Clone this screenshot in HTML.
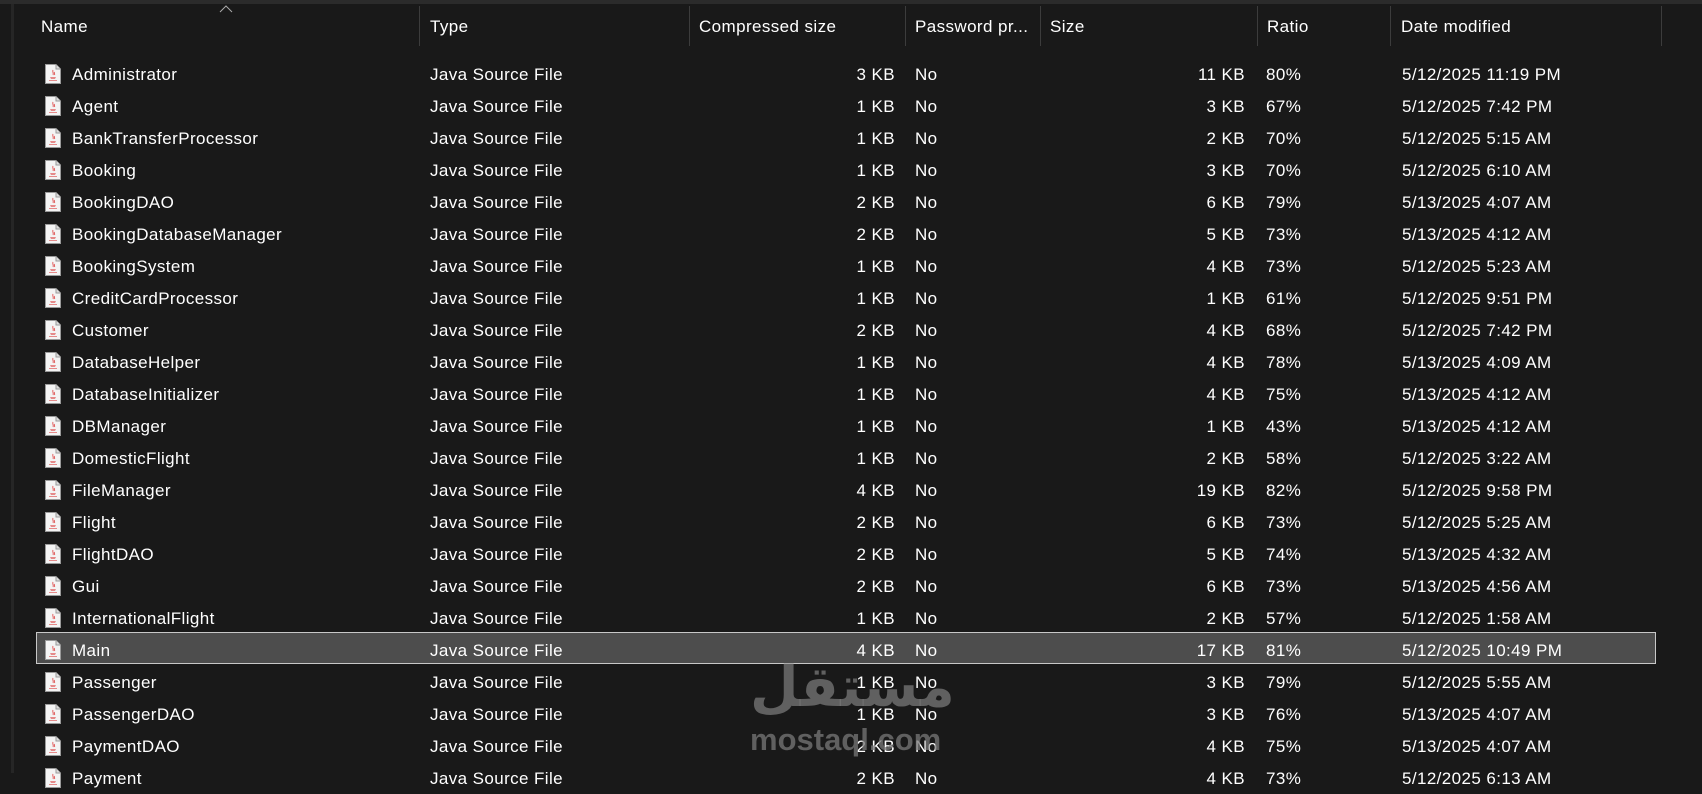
<!DOCTYPE html>
<html><head><meta charset="utf-8"><style>
*{margin:0;padding:0;box-sizing:border-box}
body{width:1702px;height:773px;overflow:hidden;background:#191919;font-family:"Liberation Sans",sans-serif;font-size:17px;letter-spacing:0.4px;color:#fff;position:relative}
.top{position:absolute;left:0;top:0;width:1702px;height:4px;background:#2b2b2b}
.vl{position:absolute;left:11px;top:4px;width:3px;height:769px;background:#262626}
.sep{position:absolute;top:6px;height:40px;width:1px;background:#3c3c3c}
.h{position:absolute;top:17px;color:#fff;white-space:nowrap}
.row{position:absolute;left:0;width:1702px;height:32px}
.row span{position:absolute;top:7px;white-space:nowrap}
.r{text-align:right}
.sel{background:#4d4d4d;border:1px solid #c8c8c8;position:absolute;left:36px;width:1620px;height:32px}
.ic{position:absolute;left:45px;top:6px;width:16px;height:20px}
.wm{position:absolute;color:rgba(120,120,120,0.75);font-weight:bold;white-space:nowrap;letter-spacing:0}
</style></head><body>
<div class="top"></div><div class="vl"></div>
<svg style="position:absolute;left:219px;top:5px" width="14" height="8"><path d="M1 7 L7 1 L13 7" stroke="#aaa" fill="none" stroke-width="1"/></svg>
<div class="h" style="left:41px">Name</div>
<div class="h" style="left:430px">Type</div>
<div class="h" style="left:699px">Compressed size</div>
<div class="h" style="left:915px">Password pr...</div>
<div class="h" style="left:1050px">Size</div>
<div class="h" style="left:1267px">Ratio</div>
<div class="h" style="left:1401px">Date modified</div>
<div class="sep" style="left:419px"></div><div class="sep" style="left:689px"></div><div class="sep" style="left:905px"></div><div class="sep" style="left:1040px"></div><div class="sep" style="left:1257px"></div><div class="sep" style="left:1390px"></div><div class="sep" style="left:1661px"></div>
<div class="sel" style="top:632px"></div>
<div id="rows"></div>
<script>
var d=[["Administrator",3,11,80,"5/12/2025 11:19 PM"],["Agent",1,3,67,"5/12/2025 7:42 PM"],["BankTransferProcessor",1,2,70,"5/12/2025 5:15 AM"],["Booking",1,3,70,"5/12/2025 6:10 AM"],["BookingDAO",2,6,79,"5/13/2025 4:07 AM"],["BookingDatabaseManager",2,5,73,"5/13/2025 4:12 AM"],["BookingSystem",1,4,73,"5/12/2025 5:23 AM"],["CreditCardProcessor",1,1,61,"5/12/2025 9:51 PM"],["Customer",2,4,68,"5/12/2025 7:42 PM"],["DatabaseHelper",1,4,78,"5/13/2025 4:09 AM"],["DatabaseInitializer",1,4,75,"5/13/2025 4:12 AM"],["DBManager",1,1,43,"5/13/2025 4:12 AM"],["DomesticFlight",1,2,58,"5/12/2025 3:22 AM"],["FileManager",4,19,82,"5/12/2025 9:58 PM"],["Flight",2,6,73,"5/12/2025 5:25 AM"],["FlightDAO",2,5,74,"5/13/2025 4:32 AM"],["Gui",2,6,73,"5/13/2025 4:56 AM"],["InternationalFlight",1,2,57,"5/12/2025 1:58 AM"],["Main",4,17,81,"5/12/2025 10:49 PM"],["Passenger",1,3,79,"5/12/2025 5:55 AM"],["PassengerDAO",1,3,76,"5/13/2025 4:07 AM"],["PaymentDAO",2,4,75,"5/13/2025 4:07 AM"],["Payment",2,4,73,"5/12/2025 6:13 AM"]];
var ic='<svg class="ic" viewBox="0 0 16 20"><path d="M0.5 0.5H11L15.5 5V19.5H0.5Z" fill="#f4f4f4" stroke="#9a9a9a"/><path d="M11 0.5V5H15.5" fill="#ddd" stroke="#9a9a9a"/><path d="M5 13h6l-1 2h-4z" fill="#e58a8a"/><path d="M8 6c-1 2 1 3 0 5M9.5 8c-.6 1 .5 1.6 0 3" stroke="#e06060" fill="none"/><path d="M4 16.5h8" stroke="#e58a8a"/></svg>';
var h='';
d.forEach(function(r,i){var t=57.5+32*i;h+='<div class="row" style="top:'+t+'px">'+ic+'<span style="left:72px">'+r[0]+'</span><span style="left:430px">Java Source File</span><span class="r" style="left:780px;width:115px">'+r[1]+' KB</span><span style="left:915px">No</span><span class="r" style="left:1100px;width:145px">'+r[2]+' KB</span><span style="left:1266px">'+r[3]+'%</span><span style="left:1402px">'+r[4]+'</span></div>';});
document.getElementById('rows').innerHTML=h;
</script>
<div class="wm" style="left:750px;top:660px;font-size:56px;font-family:'DejaVu Sans',sans-serif;line-height:1">مستقل</div>
<div class="wm" style="left:750px;top:724px;font-size:31px;line-height:1">mostaql.com</div>
</body></html>
